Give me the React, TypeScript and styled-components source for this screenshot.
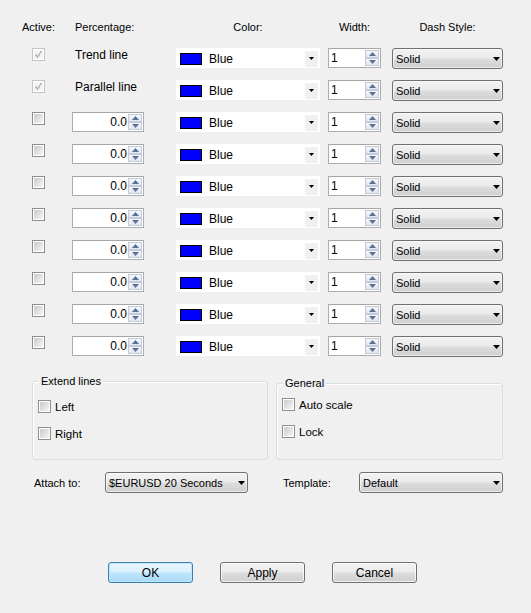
import React from 'react'
import styled, { createGlobalStyle } from 'styled-components'

const GlobalStyle = createGlobalStyle`
  html, body {
    margin: 0;
    padding: 0;
    background: #f0f0f0;
  }
  body {
    font-family: "Liberation Sans", Arial, sans-serif;
    font-size: 11px;
    color: #000;
  }
`

const Dialog = styled.div`
  width: 531px;
  height: 613px;
  box-sizing: border-box;
  padding: 20px 0 0 22px;
  background: #f0f0f0;
  display: flex;
  flex-direction: column;
`

const LinesGrid = styled.div`
  display: grid;
  grid-template-columns: 50px 104px 152px 64px 111px;
  grid-template-rows: 17px repeat(10, 21px);
  row-gap: 11px;
`

const Header = styled.div<{ $shift?: number }>`
  line-height: 14px;
  align-self: start;
  padding-left: ${(p) => p.$shift ?? 0}px;
`

const ColHeader = styled.div<{ $width: number }>`
  width: ${(p) => p.$width}px;
  text-align: center;
  line-height: 14px;
`

const LineName = styled.div`
  padding-left: 3px;
  line-height: 13px;
  padding-top: 1px;
  font-size: 12px;
`

const CheckCell = styled.div`
  padding-left: 10px;
  align-self: start;
`

const Box = styled.span<{ $disabled?: boolean }>`
  display: inline-block;
  flex: none;
  box-sizing: border-box;
  width: 13px;
  height: 13px;
  border: 1px solid ${(p) => (p.$disabled ? '#c4c4c4' : '#8e8f8f')};
  background: #fff;
  padding: 1px;
  vertical-align: top;
  position: relative;
`

const BoxInner = styled.span<{ $disabled?: boolean }>`
  display: block;
  width: 9px;
  height: 9px;
  background: ${(p) =>
    p.$disabled ? '#f4f4f4' : 'linear-gradient(135deg, #cbcbcb 0%, #e4e4e4 60%, #f6f6f6 100%)'};
`

const Tick = styled.svg`
  position: absolute;
  left: 1px;
  top: 1px;
`

function CheckBox({ checked, disabled }: { checked?: boolean; disabled?: boolean }) {
  return (
    <Box $disabled={disabled}>
      <BoxInner $disabled={disabled} />
      {checked && (
        <Tick width="9" height="9" viewBox="0 0 9 9">
          <path d="M1.5 4.5 L3.5 7 L7.5 1" fill="none" stroke="#a8a8a8" strokeWidth="1.3" />
        </Tick>
      )}
    </Box>
  )
}

const SpinBox = styled.div<{ $width: number }>`
  width: ${(p) => p.$width}px;
  height: 20px;
  box-sizing: border-box;
  border: 1px solid #abadb3;
  border-top-color: #a6a6a6;
  background: #fff;
  display: flex;
  align-items: stretch;
`

const SpinValue = styled.div<{ $right?: boolean }>`
  flex: 1;
  line-height: 18px;
  font-size: 12px;
  padding: 0 ${(p) => (p.$right ? '1px' : '0')} 0 ${(p) => (p.$right ? '0' : '2px')};
  text-align: ${(p) => (p.$right ? 'right' : 'left')};
`

const SpinButtons = styled.div`
  width: 15px;
  display: flex;
  flex-direction: column;
  padding: 1px 1px 1px 0;
  box-sizing: border-box;
`

const SpinButton = styled.div`
  flex: 1;
  box-sizing: border-box;
  border: 1px solid #c3cbd8;
  background: linear-gradient(#f5f7fa, #e2e7ee);
  display: flex;
  align-items: center;
  justify-content: center;
`

function Spinner({ value, width, right }: { value: string; width: number; right?: boolean }) {
  return (
    <SpinBox $width={width}>
      <SpinValue $right={right}>{value}</SpinValue>
      <SpinButtons>
        <SpinButton>
          <svg width="7" height="4" viewBox="0 0 7 4">
            <path d="M0 4 L3.5 0 L7 4 Z" fill="#5a6f95" />
          </svg>
        </SpinButton>
        <SpinButton>
          <svg width="7" height="4" viewBox="0 0 7 4">
            <path d="M0 0 L3.5 4 L7 0 Z" fill="#5a6f95" />
          </svg>
        </SpinButton>
      </SpinButtons>
    </SpinBox>
  )
}

const ColorCombo = styled.div`
  width: 144px;
  height: 20px;
  background: #fff;
  display: flex;
  align-items: center;
  box-sizing: border-box;
  padding: 1px 2px 0 4px;
`

const Swatch = styled.span<{ $color: string }>`
  width: 22px;
  height: 12px;
  box-sizing: border-box;
  border: 1px solid #000;
  background: ${(p) => p.$color};
  margin-right: 7px;
`

const ColorName = styled.span`
  flex: 1;
  font-size: 12px;
`

const SmallArrow = styled.span`
  width: 13px;
  height: 16px;
  background: #f0f0f0;
  display: flex;
  align-items: center;
  justify-content: center;
`

const DropList = styled.div<{ $width: number }>`
  width: ${(p) => p.$width}px;
  height: 21px;
  box-sizing: border-box;
  border: 1px solid #707070;
  border-radius: 3px;
  background: linear-gradient(#f2f2f2 0%, #ebebeb 48%, #dddddd 52%, #cfcfcf 100%);
  box-shadow: inset 0 0 0 1px rgba(255, 255, 255, 0.6);
  display: flex;
  align-items: center;
  padding: 0 2px 0 3px;
`

const DropText = styled.span`
  flex: 1;
  font-size: 11px;
  white-space: nowrap;
  overflow: hidden;
`

function Arrow({ w = 7 }: { w?: number }) {
  const h = Math.ceil(w / 2)
  return (
    <svg width={w} height={h} viewBox={`0 0 ${w} ${h}`}>
      <path d={`M0 0 L${w} 0 L${w / 2} ${h} Z`} fill="#000" />
    </svg>
  )
}

const GroupsRow = styled.div`
  display: flex;
  gap: 8px;
  margin: 24px 0 0 10px;
  align-items: flex-start;
`

const Group = styled.div<{ $width: number; $height: number; $top: number; $pad: number }>`
  position: relative;
  width: ${(p) => p.$width}px;
  height: ${(p) => p.$height}px;
  margin-top: ${(p) => p.$top}px;
  box-sizing: border-box;
  border: 1px solid #d5dfe5;
  border-radius: 3px;
  box-shadow: inset 1px 1px 0 #fff;
  padding: ${(p) => p.$pad}px 0 0 5px;
  display: flex;
  flex-direction: column;
  gap: 14px;
`

const Legend = styled.span`
  position: absolute;
  top: -7px;
  left: 6px;
  padding: 0 2px;
  background: #f0f0f0;
  line-height: 13px;
  font-size: 11px;
`

const Option = styled.label`
  display: flex;
  align-items: center;
  gap: 4px;
  height: 13px;
  font-size: 11.5px;
`

const AttachRow = styled.div`
  display: grid;
  grid-template-columns: 71px 143px 35px 76px 144px;
  align-items: center;
  margin: 12px 0 0 12px;
  font-size: 11px;
`

const ButtonRow = styled.div`
  display: flex;
  gap: 27px;
  margin: 69px 0 0 86px;
`

const Button = styled.button<{ $default?: boolean }>`
  width: 85px;
  height: 21px;
  box-sizing: border-box;
  font-family: "Liberation Sans", Arial, sans-serif;
  font-size: 12px;
  color: #000;
  border: 1px solid ${(p) => (p.$default ? '#3c7fb1' : '#707070')};
  border-radius: 3px;
  background: ${(p) =>
    p.$default
      ? 'linear-gradient(#eaf6fd 0%, #d9f0fc 48%, #bee6fd 52%, #a7d9f5 100%)'
      : 'linear-gradient(#f2f2f2 0%, #ebebeb 48%, #dddddd 52%, #cfcfcf 100%)'};
  box-shadow: inset 0 0 0 1px ${(p) => (p.$default ? '#bfe7fb' : 'rgba(255,255,255,0.7)')};
  padding: 0;
`

type LineRow = { name?: string; checked?: boolean }

const rows: LineRow[] = [
  { name: 'Trend line', checked: true },
  { name: 'Parallel line', checked: true },
  ...Array.from({ length: 8 }, () => ({})),
]

export default function App() {
  return (
    <>
      <GlobalStyle />
      <Dialog>
        <LinesGrid>
          <Header>Active:</Header>
          <Header $shift={3}>Percentage:</Header>
          <ColHeader $width={144}>Color:</ColHeader>
          <ColHeader $width={53}>Width:</ColHeader>
          <ColHeader $width={111}>Dash Style:</ColHeader>
          {rows.map((r, i) => (
            <React.Fragment key={i}>
              <CheckCell>
                <CheckBox checked={r.checked} disabled={!!r.name} />
              </CheckCell>
              {r.name ? <LineName>{r.name}</LineName> : <Spinner value="0.0" width={72} right />}
              <ColorCombo>
                <Swatch $color="#0000ff" />
                <ColorName>Blue</ColorName>
                <SmallArrow>
                  <Arrow w={5} />
                </SmallArrow>
              </ColorCombo>
              <Spinner value="1" width={53} />
              <DropList $width={111}>
                <DropText>Solid</DropText>
                <Arrow />
              </DropList>
            </React.Fragment>
          ))}
        </LinesGrid>

        <GroupsRow>
          <Group $width={236} $height={79} $top={0} $pad={18}>
            <Legend>Extend lines</Legend>
            <Option>
              <CheckBox />
              Left
            </Option>
            <Option>
              <CheckBox />
              Right
            </Option>
          </Group>
          <Group $width={227} $height={77} $top={2} $pad={14}>
            <Legend>General</Legend>
            <Option>
              <CheckBox />
              Auto scale
            </Option>
            <Option>
              <CheckBox />
              Lock
            </Option>
          </Group>
        </GroupsRow>

        <AttachRow>
          <span>Attach to:</span>
          <DropList $width={143}>
            <DropText>$EURUSD 20 Seconds</DropText>
            <Arrow />
          </DropList>
          <span />
          <span>Template:</span>
          <DropList $width={144}>
            <DropText>Default</DropText>
            <Arrow />
          </DropList>
        </AttachRow>

        <ButtonRow>
          <Button $default>OK</Button>
          <Button>Apply</Button>
          <Button>Cancel</Button>
        </ButtonRow>
      </Dialog>
    </>
  )
}
